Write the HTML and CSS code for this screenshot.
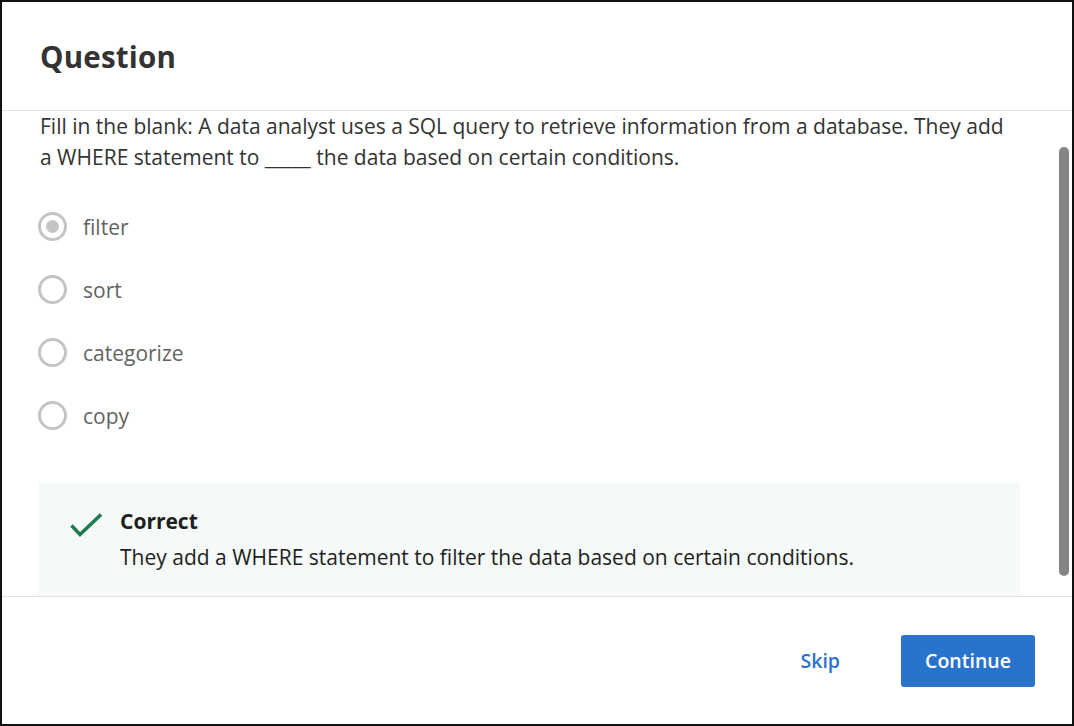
FILE: index.html
```html
<!DOCTYPE html>
<html lang="en">
<head>
<meta charset="utf-8">
<title>Question</title>
<link rel="stylesheet" href="styles.css">
</head>
<body>
<div class="dialog">
  <header class="dialog-header">
    <h1 class="dialog-title">Question</h1>
  </header>
  <div class="dialog-body">
    <div class="body-content">
      <p class="question">Fill in the blank: A data analyst uses a SQL query to retrieve information from a database. They add a WHERE statement to _____ the data based on certain conditions.</p>
      <ul class="options">
        <li class="option"><span class="radio radio-checked"></span><span class="option-label">filter</span></li>
        <li class="option"><span class="radio"></span><span class="option-label">sort</span></li>
        <li class="option"><span class="radio"></span><span class="option-label">categorize</span></li>
        <li class="option"><span class="radio"></span><span class="option-label">copy</span></li>
      </ul>
      <div class="feedback">
        <svg class="feedback-icon" width="32" height="24" viewBox="0 0 32 24" aria-hidden="true">
          <polyline points="1.5,12.5 10,21.5 31,1.5" fill="none" stroke="#1f7a4e" stroke-width="3.4"/>
        </svg>
        <div class="feedback-text">
          <div class="feedback-title">Correct</div>
          <div class="feedback-msg">They add a WHERE statement to filter the data based on certain conditions.</div>
        </div>
      </div>
    </div>
    <div class="scrollbar"><div class="scrollbar-thumb"></div></div>
  </div>
  <footer class="dialog-footer">
    <a class="skip" href="#">Skip</a>
    <button class="continue" type="button">Continue</button>
  </footer>
</div>
</body>
</html>
```

FILE: styles.css
```css
* { box-sizing: border-box; }
html, body { margin: 0; padding: 0; background: #fff; }
body {
  font-family: "Open Sans", "Noto Sans", sans-serif;
  color: #333;
}
.dialog {
  width: 1074px;
  height: 726px;
  border: 2px solid #111;
  display: flex;
  flex-direction: column;
  background: #fff;
}
.dialog-header {
  height: 109px;
  flex: none;
  display: flex;
  align-items: center;
  padding-left: 38px;
  border-bottom: 1px solid #e3e3e3;
}
.dialog-title {
  margin: 0;
  font-size: 29.5px;
  font-weight: 700;
  color: #333;
  letter-spacing: 0.2px;
}
.dialog-body {
  flex: none;
  height: 485px;
  display: flex;
  overflow: hidden;
}
.body-content {
  flex: 1;
  overflow: hidden;
  padding: 0 36px 0 36px;
}
.question {
  margin: 0 0 0 2px;
  font-size: 21px;
  line-height: 31px;
  color: #333;
}
.options {
  list-style: none;
  margin: 22px 0 0 0;
  padding: 0;
}
.option {
  height: 63px;
  display: flex;
  align-items: center;
}
.radio {
  width: 29px;
  height: 29px;
  border: 3px solid #c4c4c4;
  border-radius: 50%;
  flex: none;
  display: flex;
  align-items: center;
  justify-content: center;
}
.radio-checked::after {
  content: "";
  width: 13px;
  height: 13px;
  border-radius: 50%;
  background: #c4c4c4;
}
.option-label {
  margin-left: 16px;
  font-size: 21px;
  color: #636363;
}
.feedback {
  margin-top: 35px;
  background: #f5f9f7;
  padding: 24px 32px 24px 32px;
  display: flex;
  gap: 18px;
}
.feedback-icon {
  flex: none;
  margin-top: 7px;
}
.feedback-text {
  font-size: 21px;
  color: #1f1f1f;
}
.feedback-title {
  font-weight: 700;
  line-height: 31px;
}
.feedback-msg {
  line-height: 40px;
}
.scrollbar {
  width: 16px;
  flex: none;
  padding: 36px 3px 20px 3px;
  display: flex;
}
.scrollbar-thumb {
  flex: 1;
  background: #858585;
  border-radius: 5px;
}
.dialog-footer {
  flex: 1;
  border-top: 1px solid #e3e3e3;
  display: flex;
  align-items: center;
  justify-content: flex-end;
  padding-right: 37px;
}
.skip {
  font-size: 19.5px;
  font-weight: 600;
  color: #2a73cc;
  text-decoration: none;
  margin-right: 61px;
}
.continue {
  width: 134px;
  height: 52px;
  border: none;
  border-radius: 3px;
  background: #2a73cc;
  color: #fff;
  font-family: "Open Sans", "Noto Sans", sans-serif;
  font-size: 19.5px;
  font-weight: 600;
}
```
